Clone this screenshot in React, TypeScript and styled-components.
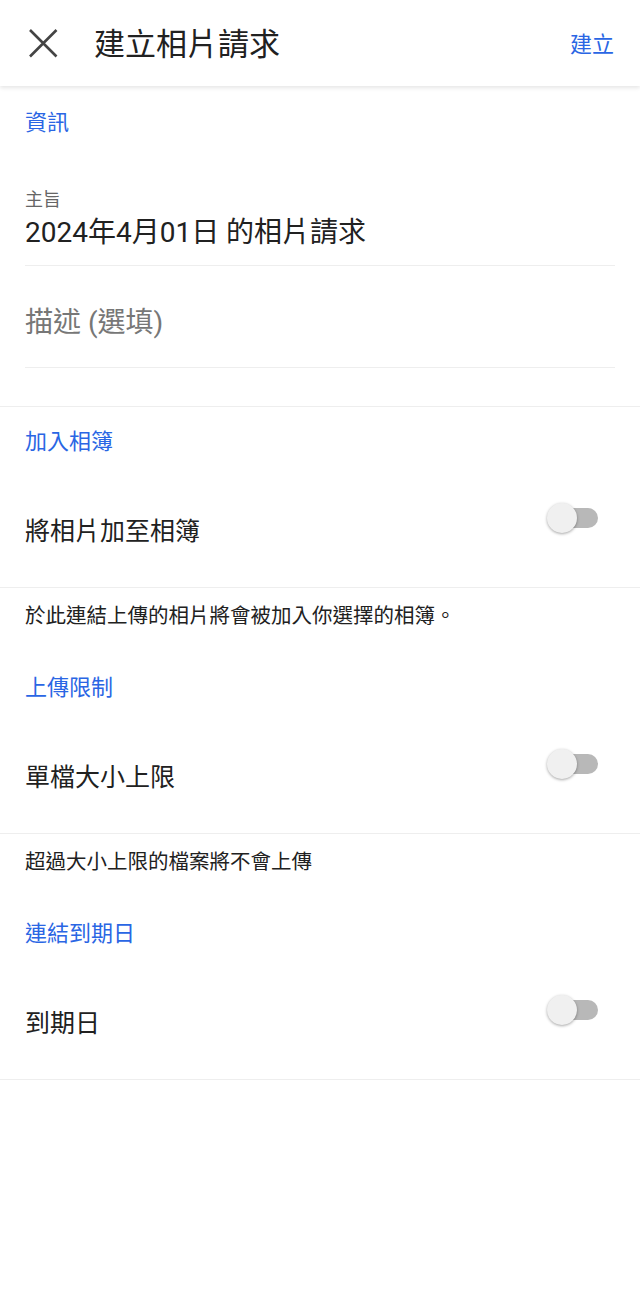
import React from "react";
import styled, { createGlobalStyle } from "styled-components";

const GlobalStyle = createGlobalStyle`
  html, body {
    margin: 0;
    padding: 0;
    background: #ffffff;
  }
  body {
    font-family: Roboto, "Noto Sans CJK TC", "Noto Sans", sans-serif;
    color: #212121;
  }
  * { box-sizing: border-box; }
`;

const Page = styled.div`
  width: 640px;
  min-height: 1294px;
  background: #ffffff;
  display: flex;
  flex-direction: column;
`;

const Header = styled.header`
  height: 86px;
  display: flex;
  align-items: center;
  padding: 3px 26px 0 20px;
  background: #ffffff;
  box-shadow: 0 2px 4px rgba(0, 0, 0, 0.1);
  position: relative;
  z-index: 1;
`;

const CloseButton = styled.button`
  width: 46px;
  height: 46px;
  padding: 0;
  margin-top: -4px;
  border: 0;
  background: transparent;
  display: flex;
  align-items: center;
  justify-content: center;
  color: #444444;
`;

const HeaderTitle = styled.h1`
  flex: 1;
  margin: 0 0 0 28px;
  font-size: 31px;
  font-weight: 400;
  line-height: 40px;
  color: #212121;
`;

const HeaderAction = styled.button`
  border: 0;
  padding: 0;
  background: transparent;
  font-family: inherit;
  font-size: 22px;
  line-height: 28px;
  color: #2a66e4;
`;

const SectionTitle = styled.div<{ $top?: number }>`
  padding: ${(p) => p.$top ?? 21}px 25px 0;
  font-size: 22px;
  line-height: 28px;
  color: #2a66e4;
`;

const Field = styled.div<{ $top: number; $bottom: number }>`
  margin: 0 25px;
  padding: ${(p) => p.$top}px 0 ${(p) => p.$bottom}px;
  border-bottom: 1px solid #eeeeee;
  display: flex;
  flex-direction: column;
  gap: 5px;
`;

const FieldLabel = styled.div`
  font-size: 18px;
  line-height: 22px;
  color: #666666;
`;

const FieldValue = styled.div`
  font-size: 28px;
  line-height: 34px;
  color: #212121;
`;

const Placeholder = styled.div`
  font-size: 28px;
  line-height: 36px;
  color: #777777;
`;

const Spacer = styled.div<{ $h: number }>`
  height: ${(p) => p.$h}px;
  border-bottom: 1px solid #eeeeee;
`;

const ToggleRow = styled.div`
  height: 132px;
  display: flex;
  align-items: flex-start;
  justify-content: space-between;
  padding: 47px 42px 0 25px;
  border-bottom: 1px solid #eeeeee;
`;

const RowLabel = styled.div`
  padding-top: 12px;
  font-size: 25px;
  line-height: 34px;
  color: #212121;
`;

const Switch = styled.div`
  position: relative;
  width: 51px;
  height: 30px;
  flex-shrink: 0;
`;

const SwitchTrack = styled.div`
  position: absolute;
  left: 10px;
  top: 5px;
  width: 41px;
  height: 20px;
  border-radius: 10px;
  background: #b8b8b8;
`;

const SwitchThumb = styled.div`
  position: absolute;
  left: 0;
  top: 0;
  width: 30px;
  height: 30px;
  border-radius: 50%;
  background: #f0f0f0;
  box-shadow: 0 1px 3px rgba(0, 0, 0, 0.35);
`;

const Note = styled.div`
  padding: 14px 25px 23px;
  font-size: 20.5px;
  line-height: 28px;
  color: #212121;
`;

const CloseIcon = () => (
  <svg width="46" height="46" viewBox="0 0 46 46" aria-hidden="true">
    <path
      d="M10 10 L36.5 36.5 M36.5 10 L10 36.5"
      stroke="currentColor"
      strokeWidth="2.6"
      fill="none"
    />
  </svg>
);

const Toggle = () => (
  <Switch>
    <SwitchTrack />
    <SwitchThumb />
  </Switch>
);

type ToggleSection = { title: string; label: string; note: string };

const toggles: ToggleSection[] = [
  {
    title: "加入相簿",
    label: "將相片加至相簿",
    note: "於此連結上傳的相片將會被加入你選擇的相簿。",
  },
  {
    title: "上傳限制",
    label: "單檔大小上限",
    note: "超過大小上限的檔案將不會上傳",
  },
  { title: "連結到期日", label: "到期日", note: "" },
];

export default function App() {
  return (
    <Page>
      <GlobalStyle />
      <Header>
        <CloseButton aria-label="close">
          <CloseIcon />
        </CloseButton>
        <HeaderTitle>建立相片請求</HeaderTitle>
        <HeaderAction>建立</HeaderAction>
      </Header>

      <SectionTitle $top={23}>資訊</SectionTitle>
      <Field $top={52} $bottom={15}>
        <FieldLabel>主旨</FieldLabel>
        <FieldValue>2024年4月01日 的相片請求</FieldValue>
      </Field>
      <Field $top={39} $bottom={26}>
        <Placeholder>描述 (選填)</Placeholder>
      </Field>
      <Spacer $h={39} />

      {toggles.map((t) => (
        <React.Fragment key={t.title}>
          <SectionTitle>{t.title}</SectionTitle>
          <ToggleRow>
            <RowLabel>{t.label}</RowLabel>
            <Toggle />
          </ToggleRow>
          {t.note && <Note>{t.note}</Note>}
        </React.Fragment>
      ))}
    </Page>
  );
}
